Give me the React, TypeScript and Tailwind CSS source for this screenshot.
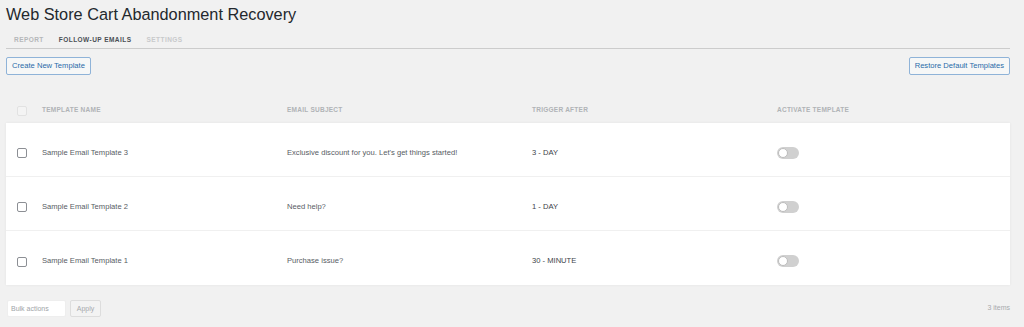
import React from "react";

const rows = [
  { name: "Sample Email Template 3", subject: "Exclusive discount for you. Let's get things started!", trigger: "3 - DAY" },
  { name: "Sample Email Template 2", subject: "Need help?", trigger: "1 - DAY" },
  { name: "Sample Email Template 1", subject: "Purchase issue?", trigger: "30 - MINUTE" },
];

function Toggle() {
  return (
    <div className="relative w-[22px] h-[12px] rounded-full bg-[#d0d0d0]">
      <div className="absolute left-[1px] top-[1px] w-[10px] h-[10px] rounded-full bg-white border border-[#bdbdbd]" />
    </div>
  );
}

function Check({ faint }: { faint?: boolean }) {
  return (
    <div
      className={
        faint
          ? "w-[10px] h-[10px] rounded-[2px] border border-[#e2e2e2] bg-[#f4f4f4]"
          : "w-[10px] h-[10px] rounded-[2px] border border-[#8c8f94] bg-white"
      }
    />
  );
}

export default function App() {
  return (
    <div
      className="w-[1024px] h-[327px] bg-[#f1f1f1] pl-[6px] pr-[14px] overflow-hidden"
      style={{ fontFamily: '"Liberation Sans", Arial, sans-serif' }}
    >
      <h1 className="pt-[4px] text-[16.3px] leading-[20px] text-[#23282d] font-normal">
        Web Store Cart Abandonment Recovery
      </h1>
      <div className="mt-[11px] flex gap-[15px] pl-[8px] h-[14px] items-start border-b border-[#cccccc] text-[6.5px] font-bold tracking-[0.45px] uppercase leading-[10px]">
        <span className="text-[#b5b7b9]">Report</span>
        <span className="text-[#4a4f55]">Follow-up Emails</span>
        <span className="text-[#c8c9cb]">Settings</span>
      </div>
      <div className="mt-[8px] flex justify-between">
        <button className="h-[18px] px-[5px] border border-[#8fb3d8] rounded-[2px] bg-[#f6f7f7] text-[7.6px] text-[#2a6aa8] leading-[16px]">
          Create New Template
        </button>
        <button className="h-[18px] px-[5px] border border-[#8fb3d8] rounded-[2px] bg-[#f6f7f7] text-[7.6px] text-[#2a6aa8] leading-[16px]">
          Restore Default Templates
        </button>
      </div>
      <div className="mt-[20px] grid grid-cols-[36px_245px_245px_245px_1fr] h-[28px] pt-[2px] items-center text-[6.5px] uppercase tracking-[0.25px] text-[#b0b3b6] font-bold">
        <div className="pl-[11px] pt-[2px]"><Check faint /></div>
        <div>Template Name</div>
        <div>Email Subject</div>
        <div>Trigger After</div>
        <div>Activate Template</div>
      </div>
      <div className="bg-white shadow-[0_0_3px_rgba(0,0,0,0.06)]">
        {rows.map((r, i) => (
          <div
            key={i}
            className={
              "grid grid-cols-[36px_245px_245px_245px_1fr] h-[54px] pt-[6px] items-center text-[7.6px] " +
              (i < rows.length - 1 ? "border-b border-[#f0f0f0]" : "")
            }
          >
            <div className="pl-[11px] pt-[1px]"><Check /></div>
            <div className="text-[#575c63]">{r.name}</div>
            <div className="text-[#575c63]">{r.subject}</div>
            <div className="text-[#3c434a]">{r.trigger}</div>
            <div><Toggle /></div>
          </div>
        ))}
      </div>
      <div className="mt-[15px] flex items-center">
        <div className="ml-[1px] w-[59px] h-[17px] bg-white border border-[#eeeeee] rounded-[2px] text-[7px] text-[#a0a4a8] pl-[3px] leading-[15px]">
          Bulk actions
        </div>
        <div className="ml-[4px] w-[31px] h-[17px] bg-[#f3f3f3] border border-[#dddddd] rounded-[2px] text-[7px] text-[#a7aaad] text-center leading-[15px]">
          Apply
        </div>
        <div className="ml-auto text-[7px] text-[#a7aaad]">3 items</div>
      </div>
    </div>
  );
}
